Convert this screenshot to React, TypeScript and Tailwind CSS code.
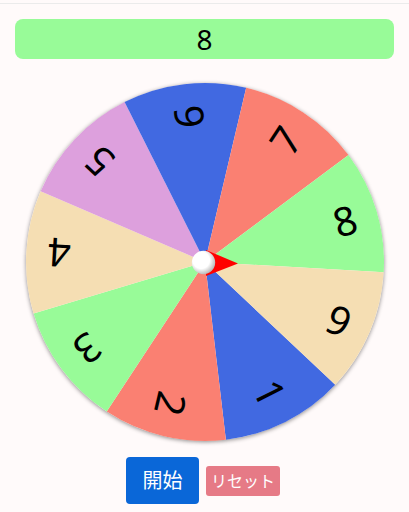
import React from "react";

const COLORS = ["#4169e1", "#fa8072", "#98fb98", "#f5deb3", "#dda0dd"];
const LABELS = [1, 2, 3, 4, 5, 6, 7, 8, 9];

const SIZE = 358;
const R = SIZE / 2;
const OFFSET = -16.7; // center angle of "8" (under the pointer)

function polar(angle: number, radius: number) {
  const rad = (angle * Math.PI) / 180;
  return [R + radius * Math.cos(rad), R + radius * Math.sin(rad)];
}

function Wheel() {
  const step = 360 / LABELS.length;
  return (
    <div className="mx-auto mt-6 h-[358px] w-[358px] rounded-full shadow-[0_1px_4px_rgba(0,0,0,0.45)]">
      <svg width={SIZE} height={SIZE} viewBox={`0 0 ${SIZE} ${SIZE}`} className="block overflow-visible">
        <defs>
          <radialGradient id="cap" cx="40%" cy="40%" r="65%">
            <stop offset="55%" stopColor="#ffffff" />
            <stop offset="100%" stopColor="#b0b0b0" />
          </radialGradient>
        </defs>
        {LABELS.map((label, i) => {
          const center = OFFSET + (label - 8) * step;
          const [x1, y1] = polar(center - step / 2, R);
          const [x2, y2] = polar(center + step / 2, R);
          const [tx, ty] = polar(center, 146);
          return (
            <g key={label}>
              <path
                d={`M${R} ${R} L${x1} ${y1} A${R} ${R} 0 0 1 ${x2} ${y2} Z`}
                fill={COLORS[i % COLORS.length]}
              />
              <text
                x={tx}
                y={ty}
                fontSize={40}
                fontFamily="'Noto Sans', sans-serif"
                textAnchor="middle"
                dominantBaseline="central"
                fill="#000"
                transform={`rotate(${center} ${tx} ${ty})`}
              >
                {label}
              </text>
            </g>
          );
        })}
        <polygon points={`${R + 1},${R - 12} ${R + 1},${R + 14} ${R + 33},${R + 1.5}`} fill="#ff0000" />
        <circle cx={R - 1.5} cy={R + 0.5} r={11.7} fill="url(#cap)" />
      </svg>
    </div>
  );
}

export default function App() {
  return (
    <div className="min-h-screen bg-[#fffafa] pt-[3px] font-['Noto_Sans','Noto_Sans_CJK_JP',sans-serif]">
      <div className="h-px bg-[#ebebeb]" />
      <div className="mx-[15px] mt-[15px] flex h-10 items-center justify-center rounded-lg bg-[#98fb98] text-[28px] text-black">
        8
      </div>
      <Wheel />
      <div className="mt-4 flex items-center justify-center gap-[7px] pr-[3px]">
        <button className="h-[47px] w-[73px] rounded bg-[#0a67d8] text-[20px] text-white">開始</button>
        <button className="h-[30px] w-[74px] rounded-[3px] bg-[#e67a86] text-[16px] text-white">リセット</button>
      </div>
    </div>
  );
}
